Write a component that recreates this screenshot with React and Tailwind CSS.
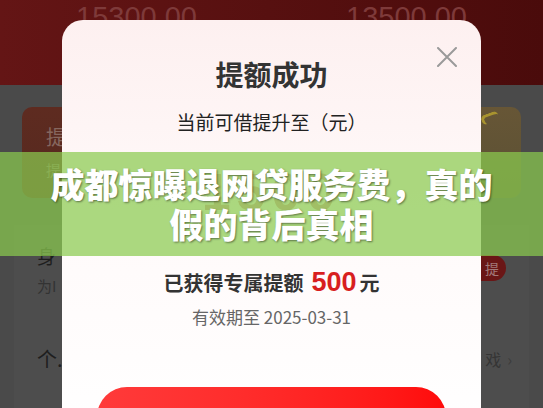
const cjk = { fontFamily: '"Noto Sans CJK SC", "Noto Sans", sans-serif' };

const CloseIcon = () => (
  <svg width="20" height="20" viewBox="0 0 20 20" fill="none">
    <path d="M1 1L19 19M19 1L1 19" stroke="#9a9a9a" strokeWidth="2" strokeLinecap="round" />
  </svg>
);

export default function App() {
  return (
    <div className="relative w-[543px] h-[408px] overflow-hidden bg-[#4a4a4a]" style={cjk}>
      {/* dimmed page behind the dialog */}
      <div className="h-[85px] bg-gradient-to-r from-[#641515] to-[#4a0b0b] overflow-hidden">
        <div className="flex justify-between pl-[76px] pr-[76px] -mt-[4px] text-[29px] text-[#7e3a3a] font-['Liberation_Sans',sans-serif]">
          <span>15300.00</span>
          <span>13500.00</span>
        </div>
      </div>
      <div className="flex justify-between px-[22px] pt-[22px]">
        <div className="w-[120px] h-[91px] rounded-[10px] bg-gradient-to-b from-[#5e2b20] to-[#55291f] pl-[24px] pt-[18px] text-[#86675f]">
          <div className="text-[20px] leading-[24px]">提</div>
          <div className="mt-[12px] text-[15px] leading-[18px]">提</div>
        </div>
        <div className="relative w-[110px] h-[91px] rounded-[10px] bg-gradient-to-b from-[#675636] to-[#5a5034]">
          <div className="absolute right-[22px] top-[6px] w-[18px] h-[10px] rounded-full border-t-[3px] border-l-[3px] border-[#a8932f] rotate-[-20deg]" />
        </div>
      </div>
      <div className="mt-[27px] mx-[14px] h-[200px] bg-[#4d4d4d] px-[23px] pt-[20px]">
        <div className="flex justify-between items-start">
          <div>
            <div className="text-[19px] leading-[22px] text-[#1e1e1e]">身</div>
            <div className="mt-[10px] text-[15px] leading-[18px] text-[#333]">为I</div>
          </div>
          <div className="mt-[10px] w-[50px] h-[26px] rounded-full bg-[#6a1616] text-[14px] leading-[26px] text-[#a27a7a] text-right pr-[7px]">提</div>
        </div>
        <div className="mt-[52px] flex justify-between items-center">
          <div className="text-[20px] leading-[24px] text-[#1e1e1e]">个.</div>
          <div className="mr-[-6px] flex items-center gap-[6px] text-[16px] text-[#353535]">
            <span>戏</span>
            <span className="text-[#3c3c3c]">›</span>
          </div>
        </div>
      </div>

      {/* dialog */}
      <div className="absolute left-[62px] top-[20px] w-[419px] h-[420px] rounded-[21px] bg-gradient-to-b from-[#fdf0f0] via-[#fffafa] to-white">
        <div className="absolute right-[24px] top-[27px]">
          <CloseIcon />
        </div>
        <div className="flex flex-col items-center">
          <div className="mt-[36px] text-[28px] leading-[36px] font-bold text-[#333]">提额成功</div>
          <div className="mt-[18px] text-[19px] leading-[24px] text-[#222]">当前可借提升至（元）</div>
          <div className="mt-[28px] text-[52px] leading-[60px] font-bold text-[#dba0a0] font-['Liberation_Sans',sans-serif] tracking-[6px]">1500</div>
          <div className="mt-[46px] flex items-baseline text-[20px] leading-[28px] font-bold text-[#333]">
            <span>已获得专属提额</span>
            <span className="ml-[8px] mr-[3px] text-[27px] text-[#d81f1f] font-['Liberation_Sans',sans-serif]">500</span>
            <span>元</span>
          </div>
          <div className="mt-[8px] text-[17px] leading-[24px] text-[#666]">有效期至 2025-03-31</div>
          <div className="mt-[58px] w-[349px] h-[60px] rounded-full bg-gradient-to-r from-[#ff3a3a] to-[#ff0a0a]" />
        </div>
      </div>

      {/* headline band */}
      <div className="absolute left-0 top-[152px] w-full h-[104px] bg-[rgba(138,202,79,0.72)] flex flex-col items-center justify-center">
        <div className="text-center text-[34px] leading-[40px] font-black text-white [text-shadow:1px_1px_2px_rgba(0,0,0,0.45)]">
          成都惊曝退网贷服务费，真的
          <br />
          假的背后真相
        </div>
      </div>
    </div>
  );
}
